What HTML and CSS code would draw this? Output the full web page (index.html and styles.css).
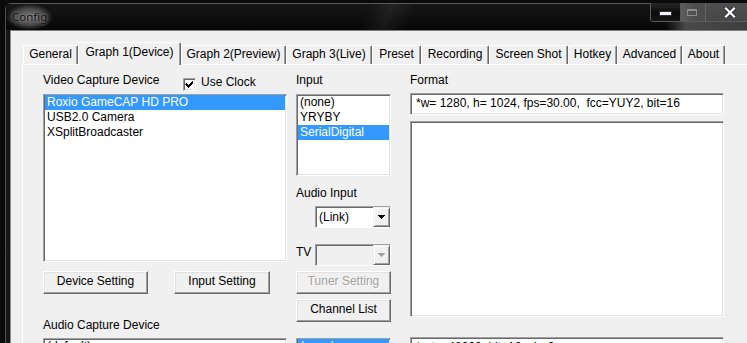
FILE: index.html
```html
<!DOCTYPE html>
<html>
<head>
<meta charset="utf-8">
<title>Config</title>
<link rel="stylesheet" href="styles.css">
</head>
<body>
<div class="window">
  <div class="titlebar">
    <span class="title">Config</span>
    <div class="caption">
      <div class="cap-btn cap-min"><span class="min-glyph"></span></div>
      <div class="cap-btn cap-max"><span class="max-glyph"></span></div>
      <div class="cap-btn cap-close">
        <svg width="12" height="11" viewBox="0 0 12 11">
          <path d="M2 1.5 L10 9.5 M10 1.5 L2 9.5" stroke="#2b2d3c" stroke-width="4.2" stroke-linecap="square" fill="none"/>
          <path d="M2 1.5 L10 9.5 M10 1.5 L2 9.5" stroke="#ffffff" stroke-width="2.2" stroke-linecap="square" fill="none"/>
        </svg>
      </div>
    </div>
  </div>
  <div class="client">
    <div class="tabs">
      <div class="tab t-general">General</div>
      <div class="tab active t-g1">Graph 1(Device)</div>
      <div class="tab t-g2">Graph 2(Preview)</div>
      <div class="tab t-g3">Graph 3(Live)</div>
      <div class="tab t-preset">Preset</div>
      <div class="tab t-rec">Recording</div>
      <div class="tab t-shot">Screen Shot</div>
      <div class="tab t-hot">Hotkey</div>
      <div class="tab t-adv">Advanced</div>
      <div class="tab t-about">About</div>
    </div>
    <div class="panel">
      <div class="col col1">
        <div class="head head-grid">
          <span class="lbl">Video Capture Device</span>
          <label class="check">
            <span class="box">
              <svg width="9" height="9" viewBox="0 0 9 9"><path d="M1 3h1v1h1v1h1v-1h1v-1h1v-1h1v-1h1v3h-1v1h-1v1h-1v1h-1v1h-1v-1h-1v-1h-1v-1h-1z" fill="#000"/></svg>
            </span>
            <span class="check-text">Use Clock</span>
          </label>
        </div>
        <div class="listbox lb-video">
          <div class="item sel">Roxio GameCAP HD PRO</div>
          <div class="item">USB2.0 Camera</div>
          <div class="item">XSplitBroadcaster</div>
        </div>
        <div class="btn-row">
          <button class="btn btn-device">Device Setting</button>
          <button class="btn btn-input">Input Setting</button>
        </div>
        <div class="lbl lbl-audio">Audio Capture Device</div>
        <div class="listbox lb-bottom">
          <div class="item">(default)</div>
        </div>
      </div>

      <div class="col col2">
        <div class="head"><span class="lbl">Input</span></div>
        <div class="listbox lb-input">
          <div class="item">(none)</div>
          <div class="item">YRYBY</div>
          <div class="item sel">SerialDigital</div>
        </div>
        <div class="lbl lbl-ai">Audio Input</div>
        <div class="combo combo-audio">
          <span class="combo-text">(Link)</span>
          <span class="drop">
            <svg width="7" height="4" viewBox="0 0 7 4"><path d="M0 0h7v1h-7z M1 1h5v1h-5z M2 2h3v1h-3z M3 3h1v1h-1z" fill="#000"/></svg>
          </span>
        </div>
        <div class="tv-row">
          <span class="lbl tv-lbl">TV</span>
          <div class="combo combo-disabled">
            <span class="combo-text"></span>
            <span class="drop">
              <svg width="7" height="4" viewBox="0 0 7 4"><path d="M0 0h7v1h-7z M1 1h5v1h-5z M2 2h3v1h-3z M3 3h1v1h-1z" fill="#a0a0a0"/></svg>
            </span>
          </div>
        </div>
        <button class="btn btn-wide btn-tuner" disabled>Tuner Setting</button>
        <button class="btn btn-wide btn-channel">Channel List</button>
        <div class="listbox lb-bottom lb-bottom2">
          <div class="item sel">(none)</div>
        </div>
      </div>

      <div class="col col3">
        <div class="head head3"><span class="lbl">Format</span></div>
        <div class="textbox">*w= 1280, h= 1024, fps=30.00,  fcc=YUY2, bit=16</div>
        <div class="listbox bigbox"></div>
        <div class="textbox bottom3">*rate=48000, bit=16, ch=2</div>
      </div>
    </div>
  </div>
</div>
</body>
</html>
```

FILE: styles.css
```css
html, body {
  margin: 0;
  padding: 0;
}

body {
  width: 747px;
  height: 343px;
  overflow: hidden;
  background: #0a0a0a;
  font-family: "Liberation Sans", Arial, sans-serif;
  font-size: 12px;
  color: #000;
}

/* ---------- window frame ---------- */
.window {
  margin: 3px 0 0 5px;
  width: 780px;
  height: 400px;
  box-sizing: border-box;
  border-top: 1px solid #5a5a5a;
  border-left: 1px solid #4e4e4e;
  border-top-left-radius: 6px;
  background: linear-gradient(90deg, #1b1b1b, #121212 4px);
  display: flex;
  flex-direction: column;
}

.titlebar {
  height: 26px;
  flex: none;
  display: flex;
  align-items: flex-start;
  padding: 0 37px 0 0;
  background:
    linear-gradient(112deg, rgba(255,255,255,0) 46%, rgba(255,255,255,0.06) 49%, rgba(255,255,255,0) 52%),
    linear-gradient(90deg, rgba(0,0,0,0) 660px, rgba(80,80,80,0.9) 680px, rgba(60,60,60,0.9) 100%),
    linear-gradient(180deg, #161616, #070707);
}

.title {
  padding: 0 6px;
  line-height: 26px;
  font-family: "Noto Sans", "Open Sans", sans-serif;
  font-size: 11.5px;
  color: #111;
  background: radial-gradient(closest-side, rgba(150,150,150,0.75), rgba(150,150,150,0.45) 60%, rgba(150,150,150,0));
  text-shadow: 0 0 3px rgba(210,210,210,0.6);
}

.caption {
  margin-left: auto;
  margin-top: -1px;
  height: 18px;
  display: flex;
  border: 1px solid #5c5c5c;
  border-top: none;
  border-radius: 0 0 0 4px;
  overflow: hidden;
}

.cap-btn {
  height: 18px;
  display: flex;
  justify-content: center;
}

.cap-min {
  width: 29px;
  align-items: flex-start;
  padding-top: 9px;
  box-sizing: border-box;
  background: linear-gradient(180deg, #252525, #0d0d0d 55%, #141414);
}

.min-glyph {
  width: 11px;
  height: 3px;
  background: #f4f4f4;
  box-shadow: 0 0 0 1px #2d2f3e;
}

.cap-max {
  width: 25px;
  align-items: flex-start;
  padding-top: 6px;
  box-sizing: border-box;
  border-left: 1px solid #555;
  background: linear-gradient(90deg, #5e5e5e, #4e4e4e 50%, #4c4c4c);
}

.max-glyph {
  width: 10px;
  height: 7px;
  box-sizing: border-box;
  border: 1px solid #8d8d8d;
  border-top-width: 2px;
  margin-right: 2px;
}

.cap-close {
  width: 42px;
  align-items: center;
  padding-left: 6px;
  box-sizing: border-box;
  border-left: 1px solid #666;
  background: linear-gradient(180deg, #4f4f4f, #474747);
}

/* ---------- client area ---------- */
.client {
  margin-left: 4px;
  flex: 1;
  border-top: 1px solid #7c7c7c;
  border-left: 1px solid #8a8a8a;
  background: #f0f0f0;
}

.tabs {
  height: 33px;
  display: flex;
  align-items: flex-end;
  padding-left: 12px;
}

.tab {
  height: 19px;
  box-sizing: border-box;
  padding: 1px 0 0;
  border-top: 1px solid #fff;
  border-left: 1px solid #fff;
  border-right: 1px solid #696969;
  box-shadow: inset -1px 0 #a0a0a0;
  border-radius: 2px 2px 0 0;
  line-height: 14px;
  white-space: nowrap;
  text-align: center;
  background: #f0f0f0;
}

.tab.active {
  height: 23px;
  margin-bottom: -1px;
  padding-top: 2px;
  position: relative;
  z-index: 1;
}

.t-general { width: 55px; }
.t-g1 { width: 103px; }
.t-g2 { width: 105px; }
.t-g3 { width: 86px; }
.t-preset { width: 49px; }
.t-rec { width: 68px; }
.t-shot { width: 79px; }
.t-hot { width: 49px; }
.t-adv { width: 65px; }
.t-about { width: 43px; }

.panel {
  margin-left: 11px;
  height: 300px;
  border-top: 1px solid #fff;
  border-left: 1px solid #fff;
  display: flex;
  align-items: flex-start;
  padding: 8px 0 0 20px;
}

.col {
  display: flex;
  flex-direction: column;
}

.col1 { width: 244px; margin-right: 9px; }
.col2 { width: 95px; margin-right: 19px; }
.col3 { width: 314px; }

.lbl {
  line-height: 14px;
  white-space: nowrap;
}

.head { height: 21px; }
.head3 { height: 20px; }

.head-grid {
  display: grid;
  grid-template-columns: 140px auto;
}

.check {
  display: flex;
  align-items: flex-start;
}

.box {
  width: 13px;
  height: 13px;
  box-sizing: border-box;
  margin-top: 5px;
  margin-right: 5px;
  border: 1px solid;
  border-color: #a0a0a0 #fff #fff #a0a0a0;
  box-shadow: inset 1px 1px #696969, inset -1px -1px #e3e3e3;
  background: #fff;
  display: flex;
  align-items: center;
  justify-content: center;
}

.check-text {
  line-height: 14px;
  padding-top: 2px;
}

/* ---------- list boxes ---------- */
.listbox {
  box-sizing: border-box;
  background: #fff;
  border: 1px solid;
  border-color: #a0a0a0 #fff #fff #a0a0a0;
  box-shadow: inset 1px 1px #696969, inset -1px -1px #e3e3e3;
  padding: 0 1px;
  overflow: hidden;
}

.item {
  height: 15px;
  line-height: 15px;
  padding-left: 2px;
  white-space: nowrap;
}

.item.sel {
  background: #3399ff;
  color: #fff;
}

.lb-video { height: 168px; }
.lb-input { height: 82px; }
.lb-bottom { height: 30px; }

/* ---------- buttons ---------- */
.btn-row {
  display: flex;
  margin-top: 9px;
}

.btn {
  box-sizing: border-box;
  height: 23px;
  margin: 0;
  padding: 0 0 2px;
  font: inherit;
  color: #000;
  background: #f0f0f0;
  border: 1px solid;
  border-color: #fff #696969 #696969 #fff;
  box-shadow: inset -1px -1px #a0a0a0, inset 1px 1px #e3e3e3;
  line-height: 19px;
  text-align: center;
  white-space: nowrap;
}

.btn:disabled {
  color: #a0a0a0;
  text-shadow: 1px 1px #fff;
}

.btn-device { width: 105px; }
.btn-input { width: 96px; margin-left: 26px; }

.btn-wide { width: 95px; }
.btn-tuner { margin-top: 5px; }
.btn-channel { margin-top: 5px; }

.lbl-audio {
  margin-top: 24px;
  height: 20px;
}

.lbl-ai {
  margin-top: 10px;
  height: 20px;
}

/* ---------- combo boxes ---------- */
.combo {
  box-sizing: border-box;
  width: 76px;
  height: 22px;
  border: 1px solid;
  border-color: #a0a0a0 #fff #fff #a0a0a0;
  box-shadow: inset 1px 1px #696969;
  background: #fff;
  display: flex;
}

.combo-audio { margin-left: 19px; }

.combo-disabled { background: #f0f0f0; }

.combo-text {
  flex: 1;
  padding-left: 3px;
  line-height: 20px;
}

.drop {
  width: 17px;
  height: 20px;
  box-sizing: border-box;
  border: 1px solid;
  border-color: #f0f0f0 #696969 #696969 #f0f0f0;
  box-shadow: inset 1px 1px #fff, inset -1px -1px #a0a0a0;
  background: #f0f0f0;
  display: flex;
  align-items: center;
  justify-content: center;
}

.drop svg { display: block; }

.tv-row {
  display: flex;
  margin-top: 16px;
}

.tv-lbl {
  width: 19px;
  padding-top: 1px;
}

.lb-bottom2 { margin-top: 16px; }

/* ---------- format column ---------- */
.textbox {
  box-sizing: border-box;
  height: 22px;
  background: #fff;
  border: 1px solid;
  border-color: #a0a0a0 #fff #fff #a0a0a0;
  box-shadow: inset 1px 1px #696969, inset -1px -1px #e3e3e3;
  padding-left: 5px;
  line-height: 18px;
  white-space: pre;
  overflow: hidden;
}

.bigbox {
  margin-top: 6px;
  height: 196px;
}

.bottom3 {
  margin-top: 20px;
  height: 30px;
}
```
